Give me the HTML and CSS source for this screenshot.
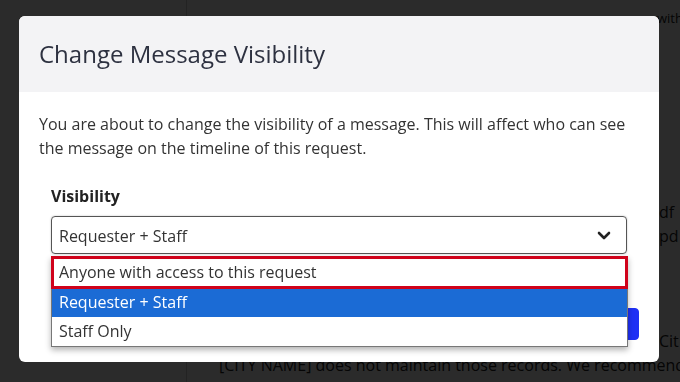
FILE: index.html
```html
<!DOCTYPE html>
<html lang="en">
<head>
    <meta charset="UTF-8">
    <meta name="viewport" content="width=device-width, initial-scale=1.0">
    <title>Change Message Visibility</title>
    <link rel="stylesheet" href="styles.css">
</head>
<body>
    <div class="page">
        <aside class="sidebar"></aside>
        <main class="content">
            <div class="line line-first"><span class="tail">with</span></div>
            <div class="line line-df"><span class="tail">df</span></div>
            <div class="line"><span class="tail">pd</span></div>
            <div class="line line-city"><span class="tail">Cit</span></div>
            <div class="line line-last">[CITY NAME] does not maintain those records. We recommend</div>
        </main>
    </div>

    <div class="backdrop">
        <div class="modal">
            <div class="modal-header">
                <h2>Change Message Visibility</h2>
            </div>
            <div class="modal-body">
                <p>You are about to change the visibility of a message. This will affect who can see the message on the timeline of this request.</p>
                <div class="field">
                    <label class="field-label">Visibility</label>
                    <div class="select-wrap">
                        <div class="select">
                            <span>Requester + Staff</span>
                            <svg class="chevron" width="14" height="9" viewBox="0 0 14 9">
                                <path d="M2 2 L7 7 L12 2" fill="none" stroke="#222" stroke-width="2.6" stroke-linecap="round" stroke-linejoin="round"/>
                            </svg>
                        </div>
                        <ul class="options">
                            <li class="option option-focus">Anyone with access to this request</li>
                            <li class="option option-selected">Requester + Staff</li>
                            <li class="option option-last">Staff Only</li>
                        </ul>
                    </div>
                </div>
            </div>
            <div class="modal-footer">
                <button class="btn">Cancel</button>
                <button class="btn btn-primary">Save</button>
            </div>
        </div>
    </div>
</body>
</html>
```

FILE: styles.css
```css
body {
    margin: 0;
    padding: 0;
    font-family: "Open Sans", Arial, sans-serif;
    background-color: #fff;
    color: #222;
    overflow: hidden;
}
.page {
    display: flex;
    height: 382px;
}
.sidebar {
    width: 186px;
    border-right: 1px solid #ccc;
}
.content {
    flex: 1;
    padding: 6px 0 0 32px;
    font-size: 16px;
    line-height: 24px;
    white-space: nowrap;
    overflow: hidden;
}
.tail {
    padding-left: 440px;
}
.line-first {
    font-size: 13px;
}
.line-first .tail {
    padding-left: 438px;
}
.line-df {
    margin-top: 170px;
}
.line-city {
    margin-top: 81px;
}
.line-last {
    margin-top: 0;
}
.backdrop {
    position: fixed;
    top: 0;
    left: 0;
    right: 0;
    bottom: 0;
    background-color: rgba(0, 0, 0, 0.83);
    padding: 16px 0 0 19px;
}
.modal {
    width: 640px;
    background-color: #fff;
    border-radius: 6px;
    overflow: hidden;
}
.modal-header {
    background-color: #f3f3f5;
    height: 76px;
    box-sizing: border-box;
    padding: 22px 20px 0;
}
.modal-header h2 {
    margin: 0;
    font-size: 24px;
    line-height: 32px;
    font-weight: 400;
    color: #2d3140;
}
.modal-body {
    padding: 20px 20px 0;
}
.modal-body p {
    margin: 0 0 24px;
    font-size: 16px;
    line-height: 24px;
    color: #333;
}
.field {
    padding: 0 12px;
}
.field-label {
    display: block;
    font-size: 16px;
    line-height: 24px;
    font-weight: 700;
    color: #222;
    margin-bottom: 8px;
}
.select-wrap {
    position: relative;
}
.select {
    display: flex;
    align-items: center;
    justify-content: space-between;
    height: 38px;
    box-sizing: border-box;
    border: 1px solid #555;
    border-radius: 4px;
    box-shadow: 0 0 2px rgba(0, 0, 0, 0.25);
    padding: 1px 15px 0 7px;
    font-size: 16px;
    line-height: 24px;
    color: #333;
}
.chevron {
    display: block;
}
.options {
    position: absolute;
    top: 40px;
    left: 0;
    right: -1px;
    margin: 0;
    padding: 0;
    list-style: none;
    background-color: #fff;
    border: 1px solid #777;
    box-shadow: 0 3px 6px rgba(0, 0, 0, 0.3);
    z-index: 10;
    font-size: 16px;
    line-height: 24px;
    color: #333;
}
.option {
    height: 28px;
    box-sizing: border-box;
    padding: 1px 0 3px 7px;
}
.option-focus {
    height: 33px;
    margin: -1px -1px 0;
    border: 3px solid #d0021b;
    padding: 1px 0 2px 5px;
}
.option-selected {
    background-color: #1b6bd5;
    color: #fff;
}
.option-last {
    height: 29px;
    padding-top: 2px;
}
.modal-footer {
    display: flex;
    justify-content: flex-end;
    gap: 10px;
    padding: 54px 20px 22px;
}
.btn {
    height: 32px;
    padding: 0 20px;
    border: 1px solid #ccc;
    border-radius: 4px;
    background-color: #fff;
    font-family: "Open Sans", Arial, sans-serif;
    font-size: 15px;
    color: #333;
}
.btn-primary {
    background-color: #1e30f5;
    border-color: #1e30f5;
    color: #fff;
    width: 90px;
}
```
